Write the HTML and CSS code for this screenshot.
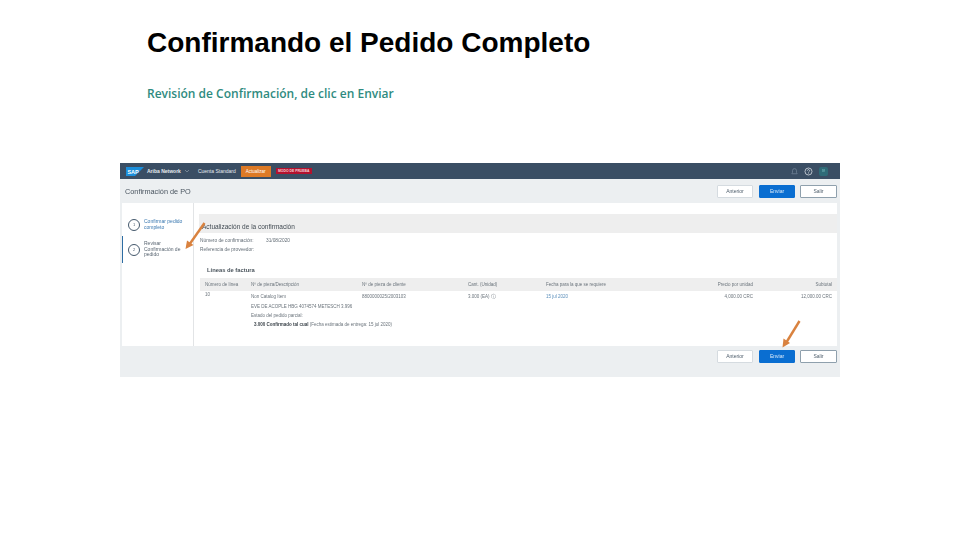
FILE: index.html
```html
<!DOCTYPE html>
<html lang="es">
<head>
<meta charset="utf-8">
<title>Confirmando el Pedido Completo</title>
<link rel="stylesheet" href="styles.css">
</head>
<body>
<main class="slide">
  <h1 class="title">Confirmando el Pedido Completo</h1>
  <p class="subtitle">Revisión de Confirmación, de clic en Enviar</p>

  <section class="shot">
    <div class="soft">
      <header class="topbar">
        <svg class="sap" viewBox="0 0 18 9" aria-label="SAP"><path d="M0 0H18L9 9H0Z" fill="#1b8fdc"/><text x="1.4" y="6.8" class="sap-text">SAP</text></svg>
        <span class="brand">Ariba Network</span>
        <svg class="chev" viewBox="0 0 6 4"><path d="M1 1l2 2 2-2" fill="none" stroke="#8e9dab" stroke-width=".7"/></svg>
        <span class="account">Cuenta Standard</span>
        <span class="update">Actualizar</span>
        <span class="mode">MODO DE PRUEBA</span>
        <span class="top-icons">
          <svg class="ico dim" viewBox="0 0 10 10"><path d="M2 7.500h6L7.200 6V4a2.200 2.200 0 0 0-4.400 0v2Z" fill="none" stroke="#75879a" stroke-width=".8"/></svg>
          <svg class="ico" viewBox="0 0 10 10"><circle cx="5" cy="5" r="3.900" fill="none" stroke="#e4e9ee" stroke-width=".8"/><path d="M3.800 4a1.200 1.200 0 1 1 1.800 1.100c-.5.3-.6.5-.6 1M5 7.100v.5" fill="none" stroke="#e4e9ee" stroke-width=".8"/></svg>
          <span class="avatar">IV</span>
        </span>
      </header>

      <div class="subheader">
        <span class="page-title">Confirmación de PO</span>
        <div class="actions">
          <span class="btn">Anterior</span>
          <span class="btn primary">Enviar</span>
          <span class="btn">Salir</span>
        </div>
      </div>

      <div class="body">
        <nav class="wizard">
          <div class="step">
            <span class="circle">1</span>
            <span class="step-text link">Confirmar pedido completo</span>
          </div>
          <div class="step current">
            <span class="circle">2</span>
            <span class="step-text">Revisar Confirmación de pedido</span>
          </div>
        </nav>

        <div class="content">
          <h2 class="band">Actualización de la confirmación</h2>
          <dl class="meta">
            <div class="meta-row"><dt>Número de confirmación:</dt><dd>31/08/2020</dd></div>
            <div class="meta-row"><dt>Referencia de proveedor:</dt><dd></dd></div>
          </dl>
          <h3 class="lines-title">Líneas de factura</h3>
          <div class="table">
            <div class="cols head">
              <span>Número de línea</span>
              <span>Nº de pieza/Descripción</span>
              <span>Nº de pieza de cliente</span>
              <span>Cant. (Unidad)</span>
              <span>Fecha para la que se requiere</span>
              <span class="num">Precio por unidad</span>
              <span class="num">Subtotal</span>
            </div>
            <div class="cols row">
              <span class="line-no">10</span>
              <span>Non Catalog Item</span>
              <span>8800000025/2003103</span>
              <span>3.000 (EA) ⓘ</span>
              <span class="date">15 jul 2020</span>
              <span class="num">4,000.00 CRC</span>
              <span class="num">12,000.00 CRC</span>
            </div>
            <div class="detail">
              <p>EVE DE ACOPLE HBG 4074574 METESCH 3.996</p>
              <p>Estado del pedido parcial:</p>
              <p class="status"><b>3.000 Confirmado tal cual</b> (Fecha estimada de entrega: 15 jul 2020)</p>
            </div>
          </div>
        </div>
      </div>

      <div class="footer">
        <div class="actions">
          <span class="btn">Anterior</span>
          <span class="btn primary">Enviar</span>
          <span class="btn">Salir</span>
        </div>
      </div>
    </div>

    <svg class="arrow arrow-left" viewBox="0 0 24 30"><path d="M21.500 2 6 24" stroke="#d9823f" stroke-width="2.400" fill="none"/><path d="M2.500 28 4 19.500l6.500 4.500Z" fill="#d9823f"/></svg>
    <svg class="arrow arrow-right" viewBox="0 0 24 30"><path d="M19.500 2 6 24" stroke="#d9823f" stroke-width="2.400" fill="none"/><path d="M2.500 28.500 3.500 19.500l6.500 4.500Z" fill="#d9823f"/></svg>
  </section>
</main>
</body>
</html>
```

FILE: styles.css
```css
* { box-sizing: border-box; }
html, body { margin: 0; padding: 0; }
body { background: #fff; font-family: "Liberation Sans", Arial, sans-serif; }

.slide { width: 960px; height: 540px; padding: 26px 120px 0; overflow: hidden; }

.title {
  margin: 0 0 0 27px;
  font: 700 28px/33px "Liberation Sans", Arial, sans-serif;
  color: #000;
}
.subtitle {
  margin: 26px 0 0 27px;
  font: 600 12px/18px "Open Sans", sans-serif;
  color: #2f8b80;
}

.shot { position: relative; width: 720px; height: 214px; margin-top: 60px; background: #eceff1; overflow: hidden; }
.soft { height: 100%; display: flex; flex-direction: column; filter: blur(.45px); font-family: "Liberation Sans", Arial, sans-serif; }

.topbar {
  flex: 0 0 16px;
  display: flex;
  align-items: center;
  padding: 0 12px 0 6px;
  background: #3a4e64;
  color: #e6ebf0;
  font-size: 5px;
}
.sap { width: 18px; height: 9px; margin-right: 3px; }
.sap-text { font: 700 5.500px "Liberation Sans", sans-serif; fill: #fff; }
.brand { font-weight: 700; }
.chev { width: 6px; height: 4px; margin: 0 8px 0 3px; }
.account { margin-right: 5px; }
.update {
  width: 30px; height: 11px; margin-right: 5px;
  background: #dd7a26; color: #fff; text-align: center; line-height: 12px; font-size: 4.500px;
}
.mode { width: 36px; height: 6px; background: #b3122e; color: #f5d5da; font: 700 3.400px/6px "Liberation Sans", sans-serif; text-align: center; }
.top-icons { margin-left: auto; display: flex; align-items: center; gap: 5px; }
.ico { width: 9px; height: 9px; }
.avatar { width: 9px; height: 9px; border-radius: 2px; margin-left: 1px; background: #2f6b78; color: #8cc; font-size: 3.500px; line-height: 9px; text-align: center; }

.subheader {
  flex: 0 0 24px;
  display: flex;
  align-items: center;
  justify-content: space-between;
  padding: 0 3px 0 5px;
}
.page-title { font-size: 7.300px; color: #4a5560; }
.actions { display: flex; gap: 6px; }
.btn {
  width: 36px; height: 13px;
  background: #fff; border: 1px solid #d5dbe0; border-radius: 1px;
  font-size: 5px; line-height: 11px; text-align: center; color: #51606e;
}
.btn:last-child { width: 37px; margin-left: -1px; border-color: #8fa0ad; }
.btn.primary { background: #0a6ed1; border-color: #0a6ed1; color: #dcebfa; }

.body { flex: 0 0 143px; display: flex; margin: 0 3px 0 2px; background: #fff; }

.wizard { flex: 0 0 72px; padding-top: 10px; border-right: 1px solid #e2e4e6; }
.step { display: flex; align-items: center; gap: 4px; height: 23px; padding-left: 6px; font-size: 5px; line-height: 5.500px; color: #5a6672; }
.step.current { height: 27px; border-left: 1px solid #2d6da3; padding-left: 5px; }
.circle {
  flex: none; width: 12px; height: 12px; border: 1px solid #44586c; border-radius: 50%;
  font-size: 4px; line-height: 10px; text-align: center; color: #44586c;
}
.link { color: #3a78b0; }
.step-text { width: 44px; }

.content { flex: 1; padding: 11px 0 0 5px; min-width: 0; }
.band { margin: 0; height: 19px; padding: 8px 0 0 3px; background: #eeeeee; font: 400 6.500px/9px "Liberation Sans", sans-serif; color: #414a52; }
.meta { margin: 3px 0 0 1px; font-size: 4.800px; color: #636d76; }
.meta-row { display: flex; height: 9px; align-items: center; }
.meta dt { width: 66px; }
.meta dd { margin: 0; }
.lines-title { margin: 12px 0 0 8px; font: 700 5.800px/9px "Liberation Sans", sans-serif; color: #4a545c; }
.table { margin: 3px 0 0 1px; }
.cols {
  display: grid;
  grid-template-columns: 46px 111px 106px 78px 1fr 70px 79px;
  padding: 0 5px 0 5px;
  font-size: 4.500px;
  color: #6b747c;
}
.head { height: 13px; align-items: center; background: #eeeeee; }
.row { padding-top: 3px; height: 11px; }
.line-no { margin-top: -2px; }
.num { text-align: right; }
.date { color: #5c8fbb; }
.detail { margin-left: 51px; font-size: 4.500px; color: #6b747c; }
.detail p { margin: 0; height: 9px; line-height: 9px; }
.status { padding-left: 3px; white-space: nowrap; }
.status b { color: #3d454c; }

.footer { flex: 1; display: flex; justify-content: flex-end; align-items: flex-start; padding: 4px 3px 0 0; }

.arrow { position: absolute; width: 24px; height: 30px; }
.arrow-left { left: 63px; top: 58px; }
.arrow-right { left: 660px; top: 156px; }
```
